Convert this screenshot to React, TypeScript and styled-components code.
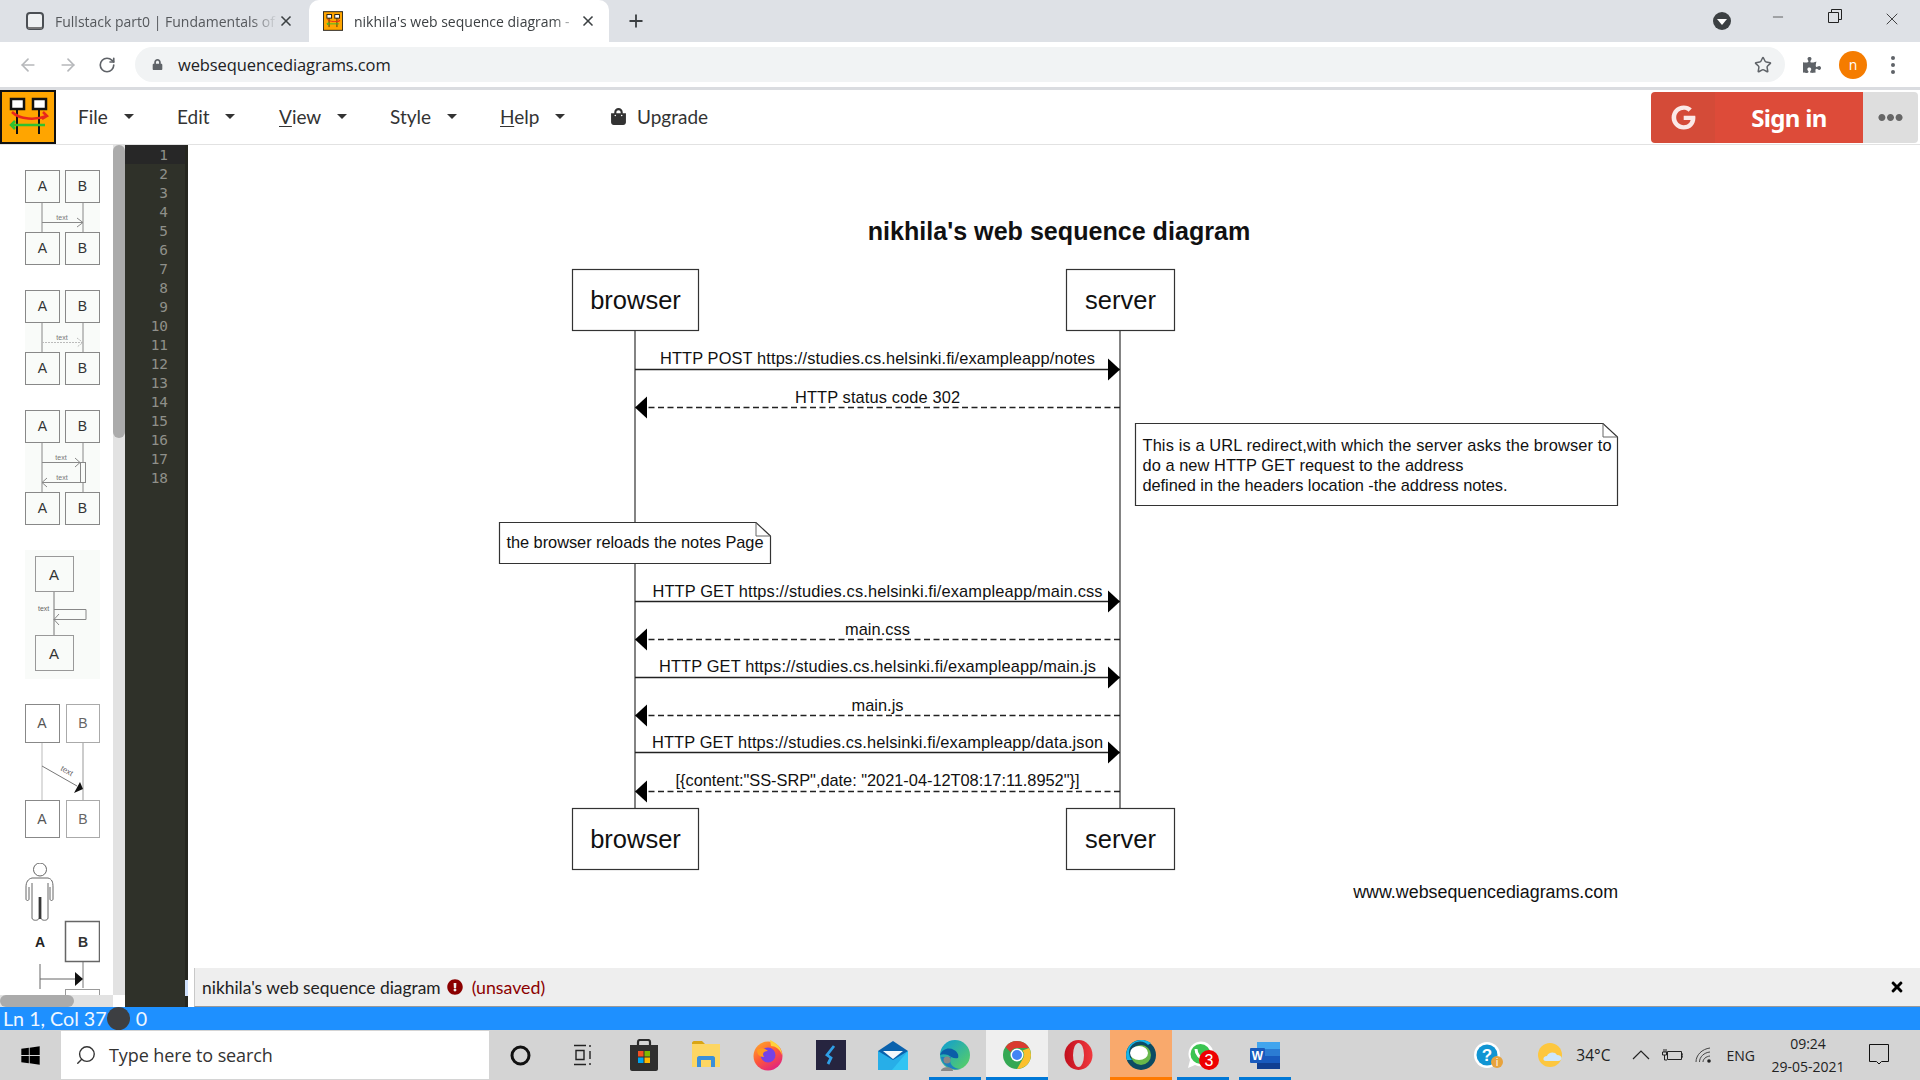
import React from 'react';
import styled, { createGlobalStyle } from 'styled-components';
import { ArrowLeft, ArrowRight, RotateCw, Star, Plus, X, Minus, Search } from 'lucide-react';
import {
  FaLock,
  FaPuzzlePiece,
  FaShoppingBag,
  FaEllipsisH,
  FaExclamationCircle,
  FaTimes,
  FaWindows,
  FaGoogle,
} from 'react-icons/fa';

const GlobalStyle = createGlobalStyle`
  html, body {
    margin: 0;
    padding: 0;
    background: #fff;
    overflow: hidden;
  }
  * {
    box-sizing: border-box;
  }
`;

const Root = styled.div`
  width: 1920px;
  height: 1080px;
  display: flex;
  flex-direction: column;
  overflow: hidden;
  font-family: 'Open Sans', 'Liberation Sans', sans-serif;
`;

/* browser chrome */

const TabStrip = styled.div`
  height: 42px;
  flex: none;
  display: flex;
  align-items: stretch;
  background: #dee1e6;
`;

const Tab = styled.div<{ $active?: boolean }>`
  position: relative;
  width: ${p => (p.$active ? '300px' : '309px')};
  padding: ${p => (p.$active ? '0 13px 0 14px' : '0 15px 0 25px')};
  display: flex;
  align-items: center;
  color: ${p => (p.$active ? '#3c4043' : '#55585c')};
  background: ${p => (p.$active ? '#fff' : 'transparent')};
  border-radius: 10px 10px 0 0;
  font-size: 14px;
`;

const TabTitle = styled.span<{ $active?: boolean }>`
  flex: 1;
  margin-left: ${p => (p.$active ? '11px' : '10px')};
  white-space: nowrap;
  overflow: hidden;
  -webkit-mask-image: linear-gradient(to right, #000 88%, transparent 100%);
  mask-image: linear-gradient(to right, #000 88%, transparent 100%);
`;

const NewTab = styled.div`
  margin-left: 17px;
  display: flex;
  align-items: center;
  color: #3c4043;
`;

const WindowControls = styled.div`
  margin-left: auto;
  display: flex;
  align-items: flex-start;
  color: #222;
`;

const TabSearch = styled.div`
  width: 18px;
  height: 18px;
  margin: 12px 18px 0 0;
  border-radius: 50%;
  background: #3c4043;
  display: flex;
  align-items: center;
  justify-content: center;

  &::after {
    content: '';
    border-left: 5px solid transparent;
    border-right: 5px solid transparent;
    border-top: 6px solid #fff;
    margin-top: 2px;
  }
`;

const WindowButton = styled.div`
  width: 57px;
  height: 36px;
  display: flex;
  align-items: flex-start;
  justify-content: center;
  padding-top: 9px;
`;

const Toolbar = styled.div`
  height: 48px;
  flex: none;
  display: flex;
  align-items: center;
  padding-left: 18px;
  background: #fff;
  border-bottom: 3px solid #dadce0;
`;

const NavButton = styled.div<{ $dim?: boolean }>`
  width: 40px;
  display: flex;
  justify-content: flex-start;
  color: ${p => (p.$dim ? '#b6b8bb' : '#5f6368')};
`;

const Omnibox = styled.div`
  width: 1650px;
  height: 35px;
  margin-left: -3px;
  display: flex;
  align-items: center;
  padding: 0 13px 0 17px;
  border-radius: 18px;
  background: #f1f3f4;
  color: #202124;
  font-size: 16.5px;
`;

const Url = styled.span`
  flex: 1;
  margin-left: 15px;
  letter-spacing: -0.1px;
`;

const ExtensionSlot = styled.div`
  margin-left: 18px;
  display: flex;
  color: #5f6368;
`;

const Avatar = styled.div`
  width: 28px;
  height: 28px;
  margin-left: 18px;
  border-radius: 50%;
  background: #f57c00;
  color: #fff;
  font-size: 14px;
  display: flex;
  align-items: center;
  justify-content: center;
`;

const KebabDots = styled.div`
  margin-left: 24px;
  display: flex;
  flex-direction: column;
  gap: 3px;

  span {
    width: 4px;
    height: 4px;
    border-radius: 50%;
    background: #5f6368;
  }
`;

/* app menu */

const MenuBar = styled.div`
  height: 55px;
  flex: none;
  display: flex;
  align-items: center;
  padding-right: 2px;
  background: #fff;
  border-bottom: 1px solid #e2e2e2;
  font-family: Lato, 'Open Sans', sans-serif;
  font-size: 19px;
  color: #333;
`;

const LogoFrame = styled.svg`
  width: 56px;
  height: 54px;
  flex: none;
  margin-right: 22px;
`;

const MenuItem = styled.div<{ $gap: number; $width: number }>`
  width: ${p => p.$width}px;
  display: flex;
  align-items: center;
  margin-top: -2px;

  u {
    text-underline-offset: 2px;
  }

  &::after {
    content: '';
    margin-left: ${p => p.$gap}px;
    border-left: 5px solid transparent;
    border-right: 5px solid transparent;
    border-top: 5px solid #333;
  }
`;

const UpgradeLink = styled.div`
  display: flex;
  align-items: center;
  gap: 10px;
  margin-top: -2px;
`;

const SignIn = styled.div`
  margin-left: auto;
  width: 267px;
  height: 51px;
  display: flex;
  border-radius: 4px;
  overflow: hidden;
  font-family: 'Noto Sans', sans-serif;
`;

const GoogleMark = styled.div`
  width: 64px;
  background: #d44b38;
  color: #fbe9e7;
  display: flex;
  align-items: center;
  justify-content: center;
  font-size: 25px;
`;

const SignInLabel = styled.div`
  width: 148px;
  background: #dd4b39;
  color: #fff;
  display: flex;
  align-items: center;
  justify-content: center;
  font-size: 24px;
  font-weight: 700;
  letter-spacing: -0.7px;
`;

const MoreButton = styled.div`
  flex: 1;
  background: #dedede;
  color: #666;
  display: flex;
  align-items: center;
  justify-content: center;
  font-size: 25px;
`;

/* editor area */

const Workspace = styled.div`
  flex: 1;
  min-height: 0;
  display: flex;
`;

const SidePane = styled.div`
  width: 125px;
  flex: none;
  display: flex;
  flex-direction: column;
`;

const SideBody = styled.div`
  flex: 1;
  min-height: 0;
  display: flex;
`;

const ThumbList = styled.div`
  width: 113px;
  flex: none;
  padding: 25px 0 0 25px;
  display: flex;
  flex-direction: column;
  gap: 25px;
  overflow: hidden;
`;

const ThumbSvg = styled.svg`
  flex: none;
  display: block;
  font-family: 'Liberation Sans', sans-serif;
`;

const VScroll = styled.div`
  width: 12px;
  background: #e2e2e2;
`;

const VThumb = styled.div`
  height: 293px;
  background: #ababab;
  border-radius: 6px;
`;

const HScroll = styled.div`
  height: 12px;
  flex: none;
  background: linear-gradient(to right, #e2e2e2 113px, #fff 113px);
`;

const HThumb = styled.div`
  width: 74px;
  height: 12px;
  border-radius: 6px;
  background: #ababab;
`;

const Gutter = styled.div`
  width: 63px;
  flex: none;
  position: relative;
  background: #2f3129;
  border-right: 3px solid #25261f;
  font-family: 'DejaVu Sans Mono', monospace;
  font-size: 14.4px;
  color: #8f908a;
  text-align: right;

  &::after {
    content: '';
    position: absolute;
    right: -3px;
    top: 835px;
    width: 3px;
    height: 16px;
    background: #cfe0fb;
  }
`;

const LineNo = styled.div<{ $current?: boolean }>`
  height: 19px;
  line-height: 21px;
  padding-right: 17px;
  background: ${p => (p.$current ? '#272727' : 'transparent')};
`;

const RightPane = styled.div`
  flex: 1;
  min-width: 0;
  display: flex;
  flex-direction: column;
`;

const DiagramCanvas = styled.svg`
  flex: 1;
  min-height: 0;
  display: block;
  width: 100%;
  font-family: 'Liberation Sans', Arial, sans-serif;
`;

const TitleBar = styled.div`
  height: 39px;
  flex: none;
  margin-left: 6px;
  padding: 0 15px 0 7px;
  display: flex;
  align-items: center;
  background: #eeeeee;
  border-left: 1px solid #c8c8c8;
  border-bottom: 1px solid #999;
  font-family: Lato, 'Open Sans', sans-serif;
  font-size: 17.4px;
  color: #222;
`;

const Unsaved = styled.span`
  margin-left: 9px;
  flex: 1;
  color: #8b0000;
  font-size: 17.8px;
`;

const ErrorIcon = styled(FaExclamationCircle)`
  margin-left: 6px;
  color: #8b0000;
`;

const StatusBar = styled.div`
  height: 23px;
  flex: none;
  display: flex;
  align-items: center;
  padding-left: 3px;
  background: #1e90ff;
  color: #eef7ff;
  font-family: Lato, 'Open Sans', sans-serif;
  font-size: 19.7px;
  white-space: nowrap;
`;

const StatusDot = styled.div`
  width: 23px;
  height: 23px;
  margin: 0 6px 0 0;
  border-radius: 50%;
  background: #3d3f42;
`;

/* windows taskbar */

const Taskbar = styled.div`
  height: 50px;
  flex: none;
  display: flex;
  align-items: stretch;
  background: #d4d4d4;
  color: #111;
`;

const StartButton = styled.div`
  width: 61px;
  display: flex;
  align-items: center;
  justify-content: center;
`;

const SearchBox = styled.div`
  width: 428px;
  margin: 1px 0;
  padding-left: 14px;
  display: flex;
  align-items: center;
  gap: 12px;
  background: #fff;
  color: #333;
  font-size: 18px;
  letter-spacing: -0.1px;
`;

const SearchGlyph = styled(Search)`
  transform: scaleX(-1);
`;

const Slot = styled.div<{ $state?: 'running' | 'active' | 'alert' }>`
  position: relative;
  width: 62.1px;
  display: flex;
  align-items: center;
  justify-content: center;
  background: ${p =>
    p.$state === 'active' ? '#efefef' : p.$state === 'alert' ? '#f9a96c' : 'transparent'};

  &::after {
    content: '';
    display: ${p => (p.$state ? 'block' : 'none')};
    position: absolute;
    bottom: 0;
    left: ${p => (p.$state === 'running' ? '5px' : '0')};
    right: ${p => (p.$state === 'running' ? '5px' : '0')};
    height: 3px;
    background: ${p => (p.$state === 'alert' ? '#ff7a00' : '#0078d7')};
  }
`;

const Tray = styled.div`
  margin-left: auto;
  padding-right: 31px;
  display: flex;
  align-items: center;
  font-size: 14px;
  color: #222;
`;

const TrayText = styled.span<{ $left: number; $size?: number }>`
  margin-left: ${p => p.$left}px;
  font-size: ${p => p.$size ?? 14}px;
`;

const TrayIcon = styled.svg<{ $left: number }>`
  margin-left: ${p => p.$left}px;
  flex: none;
`;

const Clock = styled.div`
  width: 78px;
  margin-left: 14px;
  display: flex;
  flex-direction: column;
  align-items: center;
  gap: 4px;
  font-size: 14px;
  line-height: 19px;
  white-space: nowrap;
`;

/* drawings */

const LogoMarks = () => (
  <>
    <rect x="11" y="9" width="13" height="10" fill="#fff" stroke="#111" strokeWidth="2.5" />
    <rect x="33" y="9" width="13" height="10" fill="#fff" stroke="#111" strokeWidth="2.5" />
    <path d="M17 19V44M39 19V44" stroke="#111" strokeWidth="2" />
    <path d="M12 22C20 30 36 30 47 26M43 22L47 26L42 29" fill="none" stroke="#e8281c" strokeWidth="2.5" />
    <path d="M45 35H11M15 31L11 35L15 39" fill="none" stroke="#2fc12f" strokeWidth="2.5" />
  </>
);

const Favicon = () => (
  <svg width="20" height="20" viewBox="0 0 56 54">
    <rect x="1" y="1" width="54" height="52" fill="#ffa500" stroke="#111" strokeWidth="2.5" />
    <LogoMarks />
  </svg>
);

const Logo = () => (
  <LogoFrame viewBox="0 0 56 54">
    <rect x="1" y="1" width="54" height="52" fill="#ffa500" stroke="#111" strokeWidth="2" />
    <LogoMarks />
  </LogoFrame>
);

const PageIcon = () => (
  <svg width="20" height="20" viewBox="0 0 20 20">
    <rect x="2" y="2" width="16" height="16" rx="3" fill="#eef0f2" stroke="#4b4f54" strokeWidth="2" />
    <path d="M3 17H17" stroke="#777" strokeWidth="2" />
  </svg>
);

const ThumbBoxes = ({ y, h, fill, color }: { y: number; h: number; fill: string; color: string }) => (
  <>
    {[
      { x: 0.5, label: 'A', w: 34 },
      { x: 40.5, label: 'B', w: 34 },
    ].map(b => (
      <g key={b.label}>
        <rect x={b.x} y={y + 0.5} width={b.w} height={h} fill={fill} stroke={color} strokeWidth="1" />
        <text x={b.x + b.w / 2} y={y + h / 2 + 5} textAnchor="middle" fontSize="14" fill="#333">
          {b.label}
        </text>
      </g>
    ))}
  </>
);

const ThumbPlain = ({ dashed }: { dashed?: boolean }) => (
  <ThumbSvg width="75" height="95" viewBox="0 0 75 95">
    <rect width="75" height="95" fill="#f9fbf9" />
    <path d="M17 32V63M58 32V63" stroke="#888" />
    <text x="37" y="50" textAnchor="middle" fontSize="7" fill="#777">text</text>
    <path d="M17 52.5H58M52 48L58 52.5L52 57" fill="none" stroke={dashed ? '#bbb' : '#888'} strokeDasharray={dashed ? '2 1' : undefined} />
    <ThumbBoxes y={0} h={32} fill="#f9fbf9" color="#888" />
    <ThumbBoxes y={62} h={32} fill="#f9fbf9" color="#888" />
  </ThumbSvg>
);

const ThumbActivation = () => (
  <ThumbSvg width="75" height="115" viewBox="0 0 75 115">
    <rect width="75" height="115" fill="#f9fbf9" />
    <path d="M17 32V83M58 32V83" stroke="#888" />
    <text x="36" y="50" textAnchor="middle" fontSize="7" fill="#777">text</text>
    <text x="37" y="70" textAnchor="middle" fontSize="7" fill="#777">text</text>
    <path d="M17 52.5H55M50 48L55 52.5L50 57M60 72.5H17M22 68L17 72.5L22 77" fill="none" stroke="#888" />
    <rect x="55.5" y="52.5" width="5" height="20" fill="#f9fbf9" stroke="#888" />
    <ThumbBoxes y={0} h={32} fill="#f9fbf9" color="#888" />
    <ThumbBoxes y={82} h={32} fill="#f9fbf9" color="#888" />
  </ThumbSvg>
);

const ThumbSelf = () => (
  <ThumbSvg width="75" height="129" viewBox="0 0 75 129">
    <rect width="75" height="129" fill="#f9fbf9" />
    <path d="M29 42V86" stroke="#777" />
    <path d="M29 59.5H61V69.5H29M34 64L29 69.5L34 75" fill="none" stroke="#888" />
    <text x="13" y="61" fontSize="7" fill="#666">text</text>
    <rect x="10.5" y="6.5" width="38" height="35" fill="#f9fbf9" stroke="#999" />
    <text x="29" y="30" textAnchor="middle" fontSize="15" fill="#333">A</text>
    <rect x="10.5" y="85.5" width="38" height="35" fill="#f9fbf9" stroke="#999" />
    <text x="29" y="109" textAnchor="middle" fontSize="15" fill="#333">A</text>
  </ThumbSvg>
);

const ThumbDiagonal = () => (
  <ThumbSvg width="75" height="134" viewBox="0 0 75 134">
    <path d="M17 38V96" stroke="#ddd" strokeWidth="2" />
    <path d="M58 38V96" stroke="#bbb" strokeWidth="1.5" />
    <path d="M17 62L52 82" stroke="#777" />
    <path d="M58 85L49 89L55 78Z" fill="#111" />
    <text x="0" y="0" fontSize="8" fill="#666" transform="translate(35 66) rotate(30)">text</text>
    <rect x="0.5" y="0.5" width="34" height="38" fill="#fff" stroke="#888" />
    <text x="17" y="24" textAnchor="middle" fontSize="14" fill="#555">A</text>
    <rect x="41.5" y="0.5" width="33" height="38" fill="#fff" stroke="#aaa" />
    <text x="58" y="24" textAnchor="middle" fontSize="14" fill="#666">B</text>
    <rect x="0.5" y="96.5" width="34" height="37" fill="#fff" stroke="#888" />
    <text x="17" y="120" textAnchor="middle" fontSize="14" fill="#555">A</text>
    <rect x="41.5" y="96.5" width="33" height="37" fill="#fff" stroke="#aaa" />
    <text x="58" y="120" textAnchor="middle" fontSize="14" fill="#666">B</text>
  </ThumbSvg>
);

const ThumbActor = () => (
  <ThumbSvg width="75" height="135" viewBox="0 0 75 135">
    <circle cx="15" cy="6.5" r="6.5" fill="#fff" stroke="#666" />
    <path
      d="M7 15C3 16 1 19 1 24V36C1 38 4 38 4 36V24M7 15H23C27 16 28 19 28 24V36C28 38 25 38 25 36V24M7 20V55C7 58 14 58 14 55V34M16 34V55C16 58 23 58 23 55V20"
      fill="#fff"
      stroke="#666"
    />
    <path d="M15 34V56" stroke="#111" strokeWidth="1.5" />
    <text x="15" y="84" textAnchor="middle" fontSize="14" fontWeight="700" fill="#222">A</text>
    <path d="M58 98V125" stroke="#777" />
    <path d="M15 101V126M15 116H52" stroke="#666" />
    <path d="M58 116L50 109V123Z" fill="#111" />
    <rect x="40.5" y="58.5" width="34" height="40" fill="#fff" stroke="#666" strokeWidth="1.5" />
    <text x="58" y="84" textAnchor="middle" fontSize="14" fontWeight="700" fill="#333">B</text>
    <rect x="40.5" y="126.5" width="34" height="20" fill="#fff" stroke="#999" />
  </ThumbSvg>
);

const CX_BROWSER = 635;
const CX_SERVER = 1120;
const LABEL_CX = 877.5;

const messages = [
  { y: 369.5, base: 364, text: 'HTTP POST https://studies.cs.helsinki.fi/exampleapp/notes', back: false, fit: 435 },
  { y: 407.5, base: 403, text: 'HTTP status code 302', back: true, fit: 165 },
  { y: 601.5, base: 597, text: 'HTTP GET https://studies.cs.helsinki.fi/exampleapp/main.css', back: false, fit: 450 },
  { y: 639.5, base: 634.5, text: 'main.css', back: true, fit: 65 },
  { y: 677.5, base: 672, text: 'HTTP GET https://studies.cs.helsinki.fi/exampleapp/main.js', back: false, fit: 437 },
  { y: 715.5, base: 710.5, text: 'main.js', back: true, fit: 52 },
  { y: 752.5, base: 748, text: 'HTTP GET https://studies.cs.helsinki.fi/exampleapp/data.json', back: false, fit: 451 },
  { y: 791.5, base: 786, text: '[{content:"SS-SRP",date: "2021-04-12T08:17:11.8952"}]', back: true, fit: 404 },
];

const Participant = ({ x, y, w, label }: { x: number; y: number; w: number; label: string }) => (
  <g>
    <rect x={x + 0.5} y={y + 0.5} width={w} height="61" fill="#fff" stroke="#333" strokeWidth="1.2" />
    <text x={x + w / 2 + 0.5} y={y + 40} textAnchor="middle" fontSize="25.5" fill="#111">
      {label}
    </text>
  </g>
);

type NoteLine = { text: string; fit: number };

const Note = ({
  x,
  y,
  w,
  h,
  top,
  lines,
}: {
  x: number;
  y: number;
  w: number;
  h: number;
  top: number;
  lines: NoteLine[];
}) => (
  <g>
    <path
      d={`M${x + 0.5} ${y + 0.5}H${x + w - 14}L${x + w + 0.5} ${y + 14}V${y + h + 0.5}H${x + 0.5}Z`}
      fill="#fff"
      stroke="#333"
      strokeWidth="1.2"
    />
    <path d={`M${x + w - 14} ${y + 0.5}V${y + 14}H${x + w + 0.5}`} fill="none" stroke="#666" />
    {lines.map((line, i) => (
      <text
        key={line.text}
        x={x + 7.5}
        y={y + top + i * 20}
        fontSize="16.4"
        fill="#111"
        textLength={line.fit}
        lengthAdjust="spacing"
      >
        {line.text}
      </text>
    ))}
  </g>
);

const Diagram = () => (
  <DiagramCanvas viewBox="188 145 1732 823">
    <text x="1059" y="240" textAnchor="middle" fontSize="25.1" fontWeight="700" fill="#111">
      nikhila's web sequence diagram
    </text>
    <path d={`M${CX_BROWSER} 331V522M${CX_BROWSER} 563V808M${CX_SERVER} 331V808`} stroke="#333" strokeWidth="1.2" />
    {messages.map(m => (
      <g key={m.text}>
        <line
          x1={m.back ? CX_SERVER : CX_BROWSER}
          x2={m.back ? CX_BROWSER : CX_SERVER}
          y1={m.y}
          y2={m.y}
          stroke="#222"
          strokeWidth="1.4"
          strokeDasharray={m.back ? '6 3.5' : undefined}
        />
        <text
          x={LABEL_CX}
          y={m.base}
          textAnchor="middle"
          fontSize="16.4"
          fill="#111"
          textLength={m.fit}
          lengthAdjust="spacing"
        >
          {m.text}
        </text>
        {m.back ? (
          <path d={`M${CX_BROWSER} ${m.y}L${CX_BROWSER + 12} ${m.y - 11}V${m.y + 11}Z`} fill="#000" />
        ) : (
          <path d={`M${CX_SERVER} ${m.y}L${CX_SERVER - 12} ${m.y - 11}V${m.y + 11}Z`} fill="#000" />
        )}
      </g>
    ))}
    <Participant x={572} y={269} w={126} label="browser" />
    <Participant x={1066} y={269} w={108} label="server" />
    <Participant x={572} y={808} w={126} label="browser" />
    <Participant x={1066} y={808} w={108} label="server" />
    <Note
      x={1135}
      y={423}
      w={482}
      h={82}
      top={28}
      lines={[
        { text: 'This is a URL redirect,with which the server asks the browser to', fit: 469 },
        { text: 'do a new HTTP GET request to the address', fit: 321 },
        { text: 'defined in the headers location -the address notes.', fit: 365 },
      ]}
    />
    <Note
      x={499}
      y={522}
      w={271}
      h={41}
      top={26}
      lines={[{ text: 'the browser reloads the notes Page', fit: 257 }]}
    />
    <text x="1618" y="898" textAnchor="end" fontSize="17.85" fill="#111">
      www.websequencediagrams.com
    </text>
  </DiagramCanvas>
);

const StoreIcon = () => (
  <svg width="30" height="32" viewBox="0 0 30 32">
    <path d="M9 6V3C9 2 10 1 11 1H19C20 1 21 2 21 3V6" fill="none" stroke="#2b2b2b" strokeWidth="2.2" />
    <path d="M1 6H29V30C29 31 28 32 27 32H3C2 32 1 31 1 30Z" fill="#2f2f2f" />
    <rect x="9" y="12" width="5.5" height="5.5" fill="#f25022" />
    <rect x="15.5" y="12" width="5.5" height="5.5" fill="#7fba00" />
    <rect x="9" y="18.5" width="5.5" height="5.5" fill="#00a4ef" />
    <rect x="15.5" y="18.5" width="5.5" height="5.5" fill="#ffb900" />
  </svg>
);

const FolderIcon = () => (
  <svg width="28" height="28" viewBox="0 0 28 28">
    <path d="M0 2C0 1 1 0 2 0H10L13 3H0Z" fill="#d9a514" />
    <rect y="3" width="28" height="23" fill="#fdd663" />
    <path d="M5 26V17C5 16 6 15 7 15H21C22 15 23 16 23 17V26H19V19H9V26Z" fill="#3b8fd9" />
  </svg>
);

const FirefoxIcon = () => (
  <svg width="30" height="32" viewBox="0 0 30 32">
    <defs>
      <linearGradient id="ffx" x1="0" y1="0" x2="0.6" y2="1">
        <stop offset="0" stopColor="#ffb12a" />
        <stop offset="0.55" stopColor="#ff5a36" />
        <stop offset="1" stopColor="#e3267c" />
      </linearGradient>
    </defs>
    <circle cx="15" cy="17" r="14.5" fill="url(#ffx)" />
    <path d="M17 1C24 4 29 9 29 16C27 10 22 7 18 7Z" fill="#ffd23a" />
    <circle cx="15" cy="16" r="7.5" fill="#7542e5" />
    <path d="M4 11C8 8 12 9 15 12C10 12 9 15 11 18C6 18 4 15 4 11Z" fill="#ff9a1f" />
  </svg>
);

const BoltIcon = () => (
  <svg width="30" height="30" viewBox="0 0 30 30">
    <rect width="30" height="30" fill="#26243f" />
    <path d="M18 6L11 15L15 18L12 24" fill="none" stroke="#2f9fe6" strokeWidth="2.8" />
  </svg>
);

const MailIcon = () => (
  <svg width="30" height="29" viewBox="0 0 30 29">
    <path d="M0 10L15 0L30 10V28H0Z" fill="#0a62ad" />
    <path d="M5 10H25L15 18Z" fill="#f4f8fb" />
    <path d="M0 10L15 19L30 10V29H0Z" fill="#27aee8" />
    <path d="M30 10V29H14Z" fill="#31c4f3" />
  </svg>
);

const EdgeIcon = () => (
  <svg width="31" height="31" viewBox="0 0 31 31">
    <defs>
      <linearGradient id="edg" x1="0" y1="0" x2="1" y2="1">
        <stop offset="0" stopColor="#0c9bd6" />
        <stop offset="1" stopColor="#5fd35d" />
      </linearGradient>
    </defs>
    <circle cx="16" cy="15" r="15" fill="url(#edg)" />
    <path d="M1 15C3 9 10 7 15 10C19 12 20 16 19 18C15 19 12 17 9 15C6 14 3 14 1 15Z" fill="#0b5ea8" />
    <path d="M2 17C3 25 12 31 22 29C14 29 9 23 12 17Z" fill="#1f7fc0" />
    <circle cx="8" cy="20" r="3.5" fill="#888" />
    <path d="M2 31C2 26 14 26 14 31Z" fill="#888" />
  </svg>
);

const ChromeIcon = () => (
  <svg width="28" height="28" viewBox="0 0 28 28">
    <circle cx="14" cy="14" r="14" fill="#34a853" />
    <path d="M14 0A14 14 0 0 1 26.1 7H14A7 7 0 0 0 7.6 11.2L2.6 5.9A14 14 0 0 1 14 0Z" fill="#d93b2f" />
    <path d="M26.1 7A14 14 0 0 1 14 28L20 17.5A7 7 0 0 0 19.5 9.5Z" fill="#fbc02d" />
    <circle cx="14" cy="14" r="6.5" fill="#fff" />
    <circle cx="14" cy="14" r="5" fill="#4285f4" />
  </svg>
);

const OperaIcon = () => (
  <svg width="29" height="30" viewBox="0 0 29 30">
    <defs>
      <linearGradient id="opr" x1="0" y1="0" x2="1" y2="0">
        <stop offset="0" stopColor="#c20f1d" />
        <stop offset="1" stopColor="#f0393e" />
      </linearGradient>
    </defs>
    <ellipse cx="14.5" cy="15" rx="14" ry="15" fill="url(#opr)" />
    <ellipse cx="14.5" cy="15" rx="5.5" ry="12" fill="#d4d4d4" />
  </svg>
);

const WebexIcon = () => (
  <svg width="30" height="30" viewBox="0 0 30 30">
    <circle cx="15" cy="15" r="15" fill="#0b4b63" />
    <path d="M15 0A15 15 0 0 0 1 20L6 20A10 10 0 0 1 22 5L25 3A15 15 0 0 0 15 0Z" fill="#13b5ea" />
    <circle cx="15" cy="15" r="10" fill="#67b84a" />
    <ellipse cx="13" cy="13" rx="9" ry="7" fill="#fff" />
  </svg>
);

const WhatsAppIcon = () => (
  <svg width="32" height="30" viewBox="0 0 32 30">
    <path d="M1 28L3 20A12.5 12.5 0 1 1 8 25Z" fill="#fff" />
    <circle cx="13.5" cy="14" r="10" fill="#3bc451" />
    <path d="M9 9C9 14 13 19 18 19" fill="none" stroke="#fff" strokeWidth="3" />
    <circle cx="22" cy="20" r="10" fill="#ee0000" />
    <text x="22" y="26" textAnchor="middle" fontSize="16" fill="#fff" fontFamily="Liberation Sans">3</text>
  </svg>
);

const WordIcon = () => (
  <svg width="30" height="27" viewBox="0 0 30 27">
    <rect x="7" y="0" width="23" height="7" fill="#41a5ee" />
    <rect x="7" y="7" width="23" height="7" fill="#2b7cd3" />
    <rect x="7" y="14" width="23" height="7" fill="#185abd" />
    <rect x="7" y="21" width="23" height="6" fill="#103f91" />
    <rect x="0" y="6" width="15" height="15" rx="1" fill="#185abd" />
    <text x="7.5" y="18" textAnchor="middle" fontSize="12" fontWeight="700" fill="#fff" fontFamily="Liberation Sans">W</text>
  </svg>
);

const App = () => (
  <Root>
    <GlobalStyle />
    <TabStrip>
      <Tab>
        <PageIcon />
        <TabTitle>Fullstack part0 | Fundamentals of</TabTitle>
        <X size={16} strokeWidth={2.5} color="#3c4043" />
      </Tab>
      <Tab $active>
        <Favicon />
        <TabTitle $active>nikhila's web sequence diagram -</TabTitle>
        <X size={16} strokeWidth={2.5} color="#3c4043" />
      </Tab>
      <NewTab>
        <Plus size={20} strokeWidth={2.2} />
      </NewTab>
      <WindowControls>
        <TabSearch />
        <WindowButton>
          <Minus size={16} strokeWidth={1} />
        </WindowButton>
        <WindowButton>
          <svg width="14" height="14" viewBox="0 0 14 14">
            <path d="M0.5 3.5H10.5V13.5H0.5ZM3.5 3.5V0.5H13.5V10.5H10.5" fill="none" stroke="#222" />
          </svg>
        </WindowButton>
        <WindowButton>
          <X size={20} strokeWidth={1} />
        </WindowButton>
      </WindowControls>
    </TabStrip>

    <Toolbar>
      <NavButton $dim>
        <ArrowLeft size={20} />
      </NavButton>
      <NavButton $dim>
        <ArrowRight size={20} />
      </NavButton>
      <NavButton>
        <RotateCw size={18} strokeWidth={2.2} />
      </NavButton>
      <Omnibox>
        <FaLock size={11} color="#5f6368" />
        <Url>websequencediagrams.com</Url>
        <Star size={18} color="#5f6368" strokeWidth={2} />
      </Omnibox>
      <ExtensionSlot>
        <FaPuzzlePiece size={18} />
      </ExtensionSlot>
      <Avatar>n</Avatar>
      <KebabDots>
        <span />
        <span />
        <span />
      </KebabDots>
    </Toolbar>

    <MenuBar>
      <Logo />
      <MenuItem $width={99} $gap={16}>File</MenuItem>
      <MenuItem $width={102} $gap={15}>Edit</MenuItem>
      <MenuItem $width={111} $gap={16}>
        <span>
          <u>V</u>iew
        </span>
      </MenuItem>
      <MenuItem $width={110} $gap={16}>Style</MenuItem>
      <MenuItem $width={110} $gap={16}>
        <span>
          <u>H</u>elp
        </span>
      </MenuItem>
      <UpgradeLink>
        <FaShoppingBag size={17} />
        Upgrade
      </UpgradeLink>
      <SignIn>
        <GoogleMark>
          <FaGoogle />
        </GoogleMark>
        <SignInLabel>Sign in</SignInLabel>
        <MoreButton>
          <FaEllipsisH />
        </MoreButton>
      </SignIn>
    </MenuBar>

    <Workspace>
      <SidePane>
        <SideBody>
          <ThumbList>
            <ThumbPlain />
            <ThumbPlain dashed />
            <ThumbActivation />
            <ThumbSelf />
            <ThumbDiagonal />
            <ThumbActor />
          </ThumbList>
          <VScroll>
            <VThumb />
          </VScroll>
        </SideBody>
        <HScroll>
          <HThumb />
        </HScroll>
      </SidePane>
      <Gutter>
        {Array.from({ length: 18 }, (_, i) => (
          <LineNo key={i} $current={i === 0}>
            {i + 1}
          </LineNo>
        ))}
      </Gutter>
      <RightPane>
        <Diagram />
        <TitleBar>
          nikhila's web sequence diagram
          <ErrorIcon size={16} />
          <Unsaved>(unsaved)</Unsaved>
          <FaTimes size={16} color="#000" />
        </TitleBar>
      </RightPane>
    </Workspace>

    <StatusBar>
      Ln 1, Col 37
      <StatusDot />0
    </StatusBar>

    <Taskbar>
      <StartButton>
        <FaWindows size={21} color="#000" />
      </StartButton>
      <SearchBox>
        <SearchGlyph size={22} strokeWidth={1.5} />
        Type here to search
      </SearchBox>
      <Slot>
        <svg width="21" height="21" viewBox="0 0 21 21">
          <circle cx="10.5" cy="10.5" r="8.5" fill="none" stroke="#111" strokeWidth="3" />
        </svg>
      </Slot>
      <Slot>
        <svg width="20" height="22" viewBox="0 0 20 22">
          <path d="M2 1.5H14M2 20.5H14M4 6.5H12V15.5H4ZM18 1V3M18 7V15M18 19V21" fill="none" stroke="#222" strokeWidth="1.4" />
        </svg>
      </Slot>
      <Slot>
        <StoreIcon />
      </Slot>
      <Slot>
        <FolderIcon />
      </Slot>
      <Slot>
        <FirefoxIcon />
      </Slot>
      <Slot>
        <BoltIcon />
      </Slot>
      <Slot>
        <MailIcon />
      </Slot>
      <Slot $state="running">
        <EdgeIcon />
      </Slot>
      <Slot $state="active">
        <ChromeIcon />
      </Slot>
      <Slot>
        <OperaIcon />
      </Slot>
      <Slot $state="alert">
        <WebexIcon />
      </Slot>
      <Slot $state="running">
        <WhatsAppIcon />
      </Slot>
      <Slot $state="running">
        <WordIcon />
      </Slot>
      <Tray>
        <TrayIcon $left={0} width="29" height="27" viewBox="0 0 29 27">
          <circle cx="13" cy="13" r="13" fill="#fff" />
          <circle cx="13" cy="13" r="10.5" fill="#1195d3" />
          <text x="13" y="19" textAnchor="middle" fontSize="17" fontWeight="700" fill="#fff" fontFamily="Liberation Sans">?</text>
          <circle cx="23" cy="20" r="6" fill="#e8a33c" />
          <text x="23" y="24" textAnchor="middle" fontSize="10" fill="#fff" fontFamily="Liberation Sans">i</text>
        </TrayIcon>
        <TrayIcon $left={35} width="26" height="24" viewBox="0 0 26 24">
          <circle cx="12" cy="12" r="12" fill="#fdc73f" />
          <path d="M8 18C4 18 5 13 9 13C10 9 17 8 19 12C25 12 25 18 20 18Z" fill="#cfe7fb" />
        </TrayIcon>
        <TrayText $left={12} $size={15.5}>34°C</TrayText>
        <TrayIcon $left={21} width="18" height="10" viewBox="0 0 18 10">
          <path d="M1 9L9 1L17 9" fill="none" stroke="#222" strokeWidth="1.2" />
        </TrayIcon>
        <TrayIcon $left={11} width="22" height="12" viewBox="0 0 22 12">
          <path d="M6.5 2.5H20.5V10.5H6.5ZM20.5 5H22V8H20.5M3 0V3M5 0V3M1.5 3H5.5V6H1.5ZM3.5 6V11H6" fill="none" stroke="#222" />
        </TrayIcon>
        <TrayIcon $left={12} width="17" height="16" viewBox="0 0 17 16">
          <path d="M1 15C1 8 7 2 15 1M4.5 15C4.5 10 9 5.5 15 5M8 15C8 12 11 9.5 15 9" fill="none" stroke="#444" />
          <circle cx="14" cy="14" r="1.8" fill="#222" />
        </TrayIcon>
        <TrayText $left={15}>ENG</TrayText>
        <Clock>
          <span>09:24</span>
          <span>29-05-2021</span>
        </Clock>
        <TrayIcon $left={22} width="20" height="22" viewBox="0 0 20 22">
          <path d="M0.5 0.5H19.5V17.5H12.5L10 20L7.5 17.5H0.5Z" fill="none" stroke="#111" />
        </TrayIcon>
      </Tray>
    </Taskbar>
  </Root>
);

export default App;
